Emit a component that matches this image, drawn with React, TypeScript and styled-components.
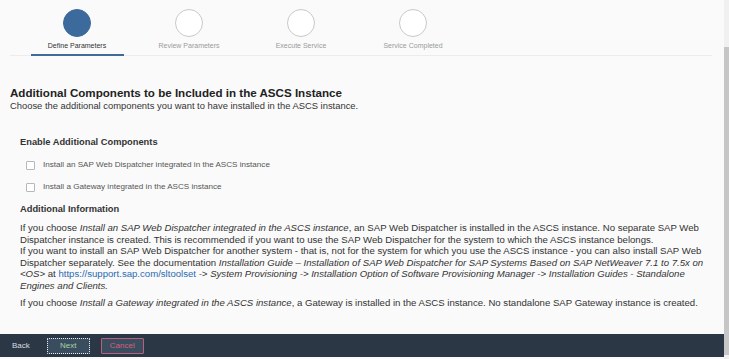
import React, { useState } from 'react';
import styled, { createGlobalStyle } from 'styled-components';

const GlobalStyle = createGlobalStyle`
  html, body {
    margin: 0;
    padding: 0;
    background: #fafafa;
    font-family: "Liberation Sans", Arial, sans-serif;
  }
`;

const Frame = styled.div`
  display: flex;
  height: 359px;
  overflow: hidden;
`;

const Main = styled.div`
  flex: 1;
  display: flex;
  flex-direction: column;
  min-width: 0;
`;

const ScrollTrack = styled.div`
  width: 5px;
  background: #f0f0f0;
  display: flex;
  flex-direction: column;
  padding-top: 47px;
  padding-bottom: 4px;
`;

const ScrollThumb = styled.div`
  flex: 1;
  background: #c6c6c6;
`;

const StepBar = styled.div`
  height: 55px;
  margin: 0 12px 0 10px;
  border-bottom: 1px solid #ececec;
  display: flex;
  padding-left: 11px;
`;

const Step = styled.div<{ active: boolean }>`
  width: 112px;
  display: flex;
  flex-direction: column;
  align-items: center;
  padding-top: 9px;
  position: relative;
  cursor: pointer;

  &::after {
    content: '';
    position: absolute;
    bottom: -1px;
    left: 10px;
    right: 9px;
    height: 2px;
    background: ${p => (p.active ? '#3d6c9a' : 'transparent')};
  }
`;

const Circle = styled.div<{ active: boolean }>`
  width: 28px;
  height: 28px;
  box-sizing: border-box;
  border-radius: 50%;
  background: ${p => (p.active ? '#3c6a9c' : '#ffffff')};
  border: 1px solid ${p => (p.active ? '#3c6a9c' : '#c9c9c9')};
`;

const StepLabel = styled.div<{ active: boolean }>`
  margin-top: 4px;
  font-size: 7px;
  line-height: 9px;
  color: ${p => (p.active ? '#333333' : '#9a9a9a')};
`;

const Content = styled.div`
  flex: 1;
  padding: 30px 10px 0 10px;
  overflow: hidden;
`;

const Title = styled.h1`
  margin: 0;
  font-size: 11.6px;
  line-height: 14px;
  font-weight: bold;
  color: #222;
`;

const Subtitle = styled.p`
  margin: 0;
  font-size: 9.4px;
  line-height: 12px;
  color: #333;
`;

const Section = styled.div`
  padding-left: 10px;
`;

const SectionTitle = styled.h2<{ top: number }>`
  margin: ${p => p.top}px 0 0 0;
  font-size: 9.3px;
  line-height: 12px;
  font-weight: bold;
  color: #333;
`;

const OptionList = styled.div`
  display: flex;
  flex-direction: column;
  gap: 10px;
  margin-top: 11px;
  padding-left: 6px;
`;

const Option = styled.label`
  display: flex;
  align-items: center;
  gap: 8px;
  font-size: 8.1px;
  line-height: 12px;
  color: #555;
  cursor: pointer;
`;

const Box = styled.span<{ checked: boolean }>`
  width: 9px;
  height: 9px;
  box-sizing: border-box;
  border: 1px solid #b8b8b8;
  background: ${p => (p.checked ? '#3c6a9c' : '#fff')};
  border-radius: 1px;
`;

const Paragraph = styled.p<{ top: number }>`
  margin: ${p => p.top}px 0 0 0;
  font-size: 9.6px;
  line-height: 11.5px;
  color: #333;

  em {
    font-style: italic;
  }
`;

const Link = styled.a`
  color: #2a6bb3;
  text-decoration: none;
`;

const Footer = styled.div`
  height: 23px;
  margin-bottom: 2px;
  background: #2b3744;
  display: flex;
  align-items: center;
  padding-left: 12px;
  gap: 11px;
`;

const BackLink = styled.span`
  font-size: 8px;
  color: #d8dde2;
  margin-right: 6px;
  cursor: pointer;
`;

const FooterButton = styled.button<{ variant: 'next' | 'cancel' }>`
  width: 43px;
  height: 16px;
  box-sizing: border-box;
  padding: 0;
  font-family: "Liberation Sans", Arial, sans-serif;
  font-size: 8px;
  background: #3a4d5e;
  border: 1px ${p => (p.variant === 'next' ? 'dotted #e6ecef' : 'solid #b8607c')};
  color: ${p => (p.variant === 'next' ? '#a9d2a4' : '#d4607a')};
  border-radius: 1px;
  cursor: pointer;
`;

const steps = ['Define Parameters', 'Review Parameters', 'Execute Service', 'Service Completed'];

const App: React.FC = () => {
  const [active, setActive] = useState(0);
  const [web, setWeb] = useState(false);
  const [gateway, setGateway] = useState(false);

  return (
    <Frame>
      <GlobalStyle />
      <Main>
        <StepBar>
          {steps.map((s, i) => (
            <Step key={s} active={i === active} onClick={() => setActive(i)}>
              <Circle active={i === active} />
              <StepLabel active={i === active}>{s}</StepLabel>
            </Step>
          ))}
        </StepBar>

        <Content>
          <Title>Additional Components to be Included in the ASCS Instance</Title>
          <Subtitle>Choose the additional components you want to have installed in the ASCS instance.</Subtitle>

          <Section>
            <SectionTitle top={24}>Enable Additional Components</SectionTitle>
            <OptionList>
              <Option onClick={() => setWeb(!web)}>
                <Box checked={web} />
                Install an SAP Web Dispatcher integrated in the ASCS instance
              </Option>
              <Option onClick={() => setGateway(!gateway)}>
                <Box checked={gateway} />
                Install a Gateway integrated in the ASCS instance
              </Option>
            </OptionList>

            <SectionTitle top={10}>Additional Information</SectionTitle>
            <Paragraph top={7}>
              If you choose <em>Install an SAP Web Dispatcher integrated in the ASCS instance</em>, an SAP Web
              Dispatcher is installed in the ASCS instance. No separate SAP Web Dispatcher instance is created. This
              is recommended if you want to use the SAP Web Dispatcher for the system to which the ASCS instance
              belongs.
              <br />
              If you want to install an SAP Web Dispatcher for another system - that is, not for the system for which
              you use the ASCS instance - you can also install SAP Web Dispatcher separately. See the documentation{' '}
              <em>
                Installation Guide – Installation of SAP Web Dispatcher for SAP Systems Based on SAP NetWeaver 7.1 to
                7.5x on &lt;OS&gt;
              </em>{' '}
              at <Link href="#">https://support.sap.com/sltoolset</Link>{' '}
              <em>
                -&gt; System Provisioning -&gt; Installation Option of Software Provisioning Manager -&gt; Installation
                Guides - Standalone Engines and Clients.
              </em>
            </Paragraph>
            <Paragraph top={6}>
              If you choose <em>Install a Gateway integrated in the ASCS instance</em>, a Gateway is installed in the
              ASCS instance. No standalone SAP Gateway instance is created.
            </Paragraph>
          </Section>
        </Content>

        <Footer>
          <BackLink>Back</BackLink>
          <FooterButton variant="next">Next</FooterButton>
          <FooterButton variant="cancel">Cancel</FooterButton>
        </Footer>
      </Main>
      <ScrollTrack>
        <ScrollThumb />
      </ScrollTrack>
    </Frame>
  );
};

export default App;
